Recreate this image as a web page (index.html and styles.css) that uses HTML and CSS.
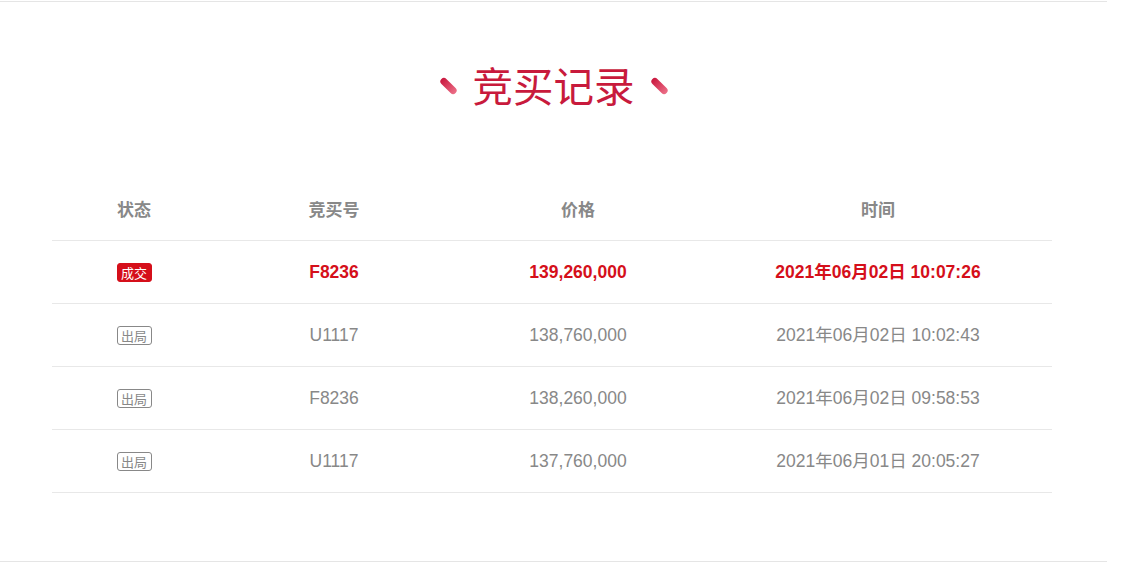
FILE: index.html
```html
<!DOCTYPE html>
<html lang="zh-CN">
<head>
<meta charset="utf-8">
<title>竞买记录</title>
<link rel="stylesheet" href="styles.css">
</head>
<body>
<div class="page">
  <div class="title">
    <span class="pill"></span>
    <h2 class="title-text">竞买记录</h2>
    <span class="pill"></span>
  </div>
  <div class="table">
    <div class="row head">
      <div class="cell">状态</div>
      <div class="cell">竞买号</div>
      <div class="cell">价格</div>
      <div class="cell">时间</div>
    </div>
    <div class="row win">
      <div class="cell"><span class="badge badge-win">成交</span></div>
      <div class="cell">F8236</div>
      <div class="cell">139,260,000</div>
      <div class="cell">2021年06月02日 10:07:26</div>
    </div>
    <div class="row">
      <div class="cell"><span class="badge badge-out">出局</span></div>
      <div class="cell">U1117</div>
      <div class="cell">138,760,000</div>
      <div class="cell">2021年06月02日 10:02:43</div>
    </div>
    <div class="row">
      <div class="cell"><span class="badge badge-out">出局</span></div>
      <div class="cell">F8236</div>
      <div class="cell">138,260,000</div>
      <div class="cell">2021年06月02日 09:58:53</div>
    </div>
    <div class="row">
      <div class="cell"><span class="badge badge-out">出局</span></div>
      <div class="cell">U1117</div>
      <div class="cell">137,760,000</div>
      <div class="cell">2021年06月01日 20:05:27</div>
    </div>
  </div>
</div>
</body>
</html>
```
FILE: styles.css
```css
html, body {
  margin: 0;
  padding: 0;
  background: #fff;
}
body {
  font-family: "Liberation Sans", Arial, "Noto Sans CJK SC", sans-serif;
  color: #888;
}
.page {
  width: 1107px;
  margin-top: 1px;
  border-top: 1px solid #e5e5e5;
  border-bottom: 1px solid #e5e5e5;
  padding-top: 62px;
  padding-bottom: 68px;
  box-sizing: border-box;
  height: 561px;
}
.title {
  display: flex;
  justify-content: center;
  align-items: center;
  gap: 21px;
  height: 41px;
}
.title-text {
  margin: 0;
  font-family: "Noto Sans CJK SC", sans-serif;
  font-weight: normal;
  font-size: 40.5px;
  line-height: 41px;
  color: #c81a3c;
}
.pill {
  display: block;
  width: 7px;
  height: 20px;
  border-radius: 4px;
  background: linear-gradient(to bottom, #c9163d, #ec7088);
  transform: rotate(-45deg);
  margin-top: 2px;
}
.table {
  width: 1000px;
  margin: 73px 0 0 52px;
}
.row {
  display: grid;
  grid-template-columns: 164px 236px 252px 348px;
  height: 62px;
  border-bottom: 1px solid #e8e8e8;
  align-items: center;
  font-size: 17.5px;
}
.cell {
  text-align: center;
  line-height: 20px;
}
.head {
  font-weight: bold;
  color: #888;
}
.head .cell {
  font-family: "Noto Sans CJK SC", sans-serif;
  font-size: 17px;
}
.win {
  color: #d50f1a;
  font-weight: bold;
}
.badge {
  display: inline-block;
  box-sizing: border-box;
  width: 35px;
  height: 19px;
  line-height: 17px;
  font-size: 13px;
  font-weight: normal;
  font-family: "Noto Sans CJK SC", sans-serif;
  border-radius: 3px;
  vertical-align: middle;
}
.badge-win {
  background: #d50f1a;
  color: #fff;
  border: 1px solid #d50f1a;
}
.badge-out {
  color: #888;
  border: 1px solid #888;
}
```
